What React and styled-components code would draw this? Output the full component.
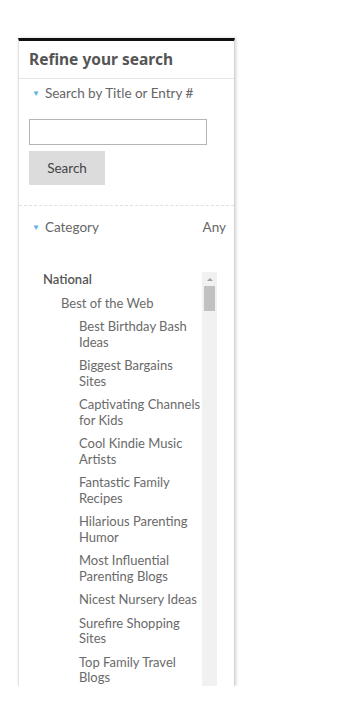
import React from 'react'
import styled, { createGlobalStyle } from 'styled-components'

const GlobalStyle = createGlobalStyle`
  body {
    margin: 0;
    background: #fff;
    font-family: Lato, "Noto Sans", sans-serif;
  }
`

const categories = [
  'Best Birthday Bash Ideas',
  'Biggest Bargains Sites',
  'Captivating Channels for Kids',
  'Cool Kindie Music Artists',
  'Fantastic Family Recipes',
  'Hilarious Parenting Humor',
  'Most Influential Parenting Blogs',
  'Nicest Nursery Ideas',
  'Surefire Shopping Sites',
  'Top Family Travel Blogs',
]

const App = () => {
  return (
    <Page>
      <GlobalStyle />
      <Panel>
        <Header>Refine your search</Header>
        <Section>
          <Toggle>
            <Arrow>▼</Arrow>Search by Title or Entry #
          </Toggle>
          <SearchInput type="text" />
          <SearchButton>Search</SearchButton>
        </Section>
        <Section dashed>
          <ToggleRow>
            <Toggle>
              <Arrow>▼</Arrow>Category
            </Toggle>
            <Value>Any</Value>
          </ToggleRow>
          <ListBox>
            <List>
              <Item level={0} strong>National</Item>
              <Item level={1}>Best of the Web</Item>
              {categories.map(c => (
                <Item key={c} level={2}>{c}</Item>
              ))}
            </List>
            <Scrollbar>
              <ScrollArrow />
              <Thumb />
            </Scrollbar>
          </ListBox>
        </Section>
      </Panel>
    </Page>
  )
}

export default App

const Page = styled.div`
  padding: 38px 0 0 18px;
`
const Panel = styled.div`
  width: 215px;
  height: 645px;
  overflow: hidden;
  border-top: 3px solid #111;
  border-left: 1px solid #e2e2e2;
  border-right: 1px solid #d5d5d5;
  box-shadow: 1px 0 3px rgba(0, 0, 0, 0.18);
  background: #fff;
  color: #666;
`
const Header = styled.div`
  padding: 9px 10px 10px 10px;
  font-family: "Noto Sans", Lato, sans-serif;
  font-size: 15.5px;
  font-weight: 700;
  color: #555;
  line-height: 18px;
  border-bottom: 1px solid #e6e6e6;
`
const Section = styled.div`
  padding: 6px 0 20px 10px;
  border-top: ${p => (p.dashed ? '1px dashed #e0e0e0' : 'none')};
  ${p => p.dashed && 'padding-top: 13px;'}
`
const ToggleRow = styled.div`
  display: flex;
  justify-content: space-between;
  align-items: center;
  padding-right: 8px;
`
const Toggle = styled.div`
  display: flex;
  align-items: center;
  font-size: 13.5px;
  line-height: 16px;
  color: #666;
`
const Arrow = styled.span`
  color: #5ab4e6;
  font-size: 8px;
  margin: 0 5px 0 3px;
`
const Value = styled.span`
  font-size: 13.5px;
  color: #666;
`
const SearchInput = styled.input`
  display: block;
  box-sizing: border-box;
  width: 178px;
  height: 26px;
  margin: 18px 0 6px 0;
  border: 1px solid #b5b5b5;
  padding: 0 4px;
`
const SearchButton = styled.button`
  display: block;
  width: 76px;
  height: 34px;
  border: none;
  background: #dcdcdc;
  color: #444;
  font-family: Lato, "Noto Sans", sans-serif;
  font-size: 13.5px;
  padding: 0;
`
const ListBox = styled.div`
  display: flex;
  width: 186px;
  margin-top: 37px;
  margin-left: 2px;
  height: 420px;
`
const List = styled.ul`
  list-style: none;
  margin: 0;
  padding: 0;
  flex: 1;
`
const Item = styled.li`
  font-size: 13px;
  line-height: 15.5px;
  margin-bottom: 8px;
  padding-left: ${p => 12 + p.level * 18}px;
  color: ${p => (p.strong ? '#555' : '#6a6a6a')};
  font-weight: ${p => (p.strong ? 600 : 400)};
`
const Scrollbar = styled.div`
  width: 15px;
  background: #f1f1f1;
  display: flex;
  flex-direction: column;
  align-items: center;
`
const ScrollArrow = styled.div`
  margin-top: 6px;
  width: 0;
  height: 0;
  border-left: 3px solid transparent;
  border-right: 3px solid transparent;
  border-bottom: 3px solid #a3a3a3;
`
const Thumb = styled.div`
  margin-top: 5px;
  width: 11px;
  height: 25px;
  background: #c1c1c1;
`
